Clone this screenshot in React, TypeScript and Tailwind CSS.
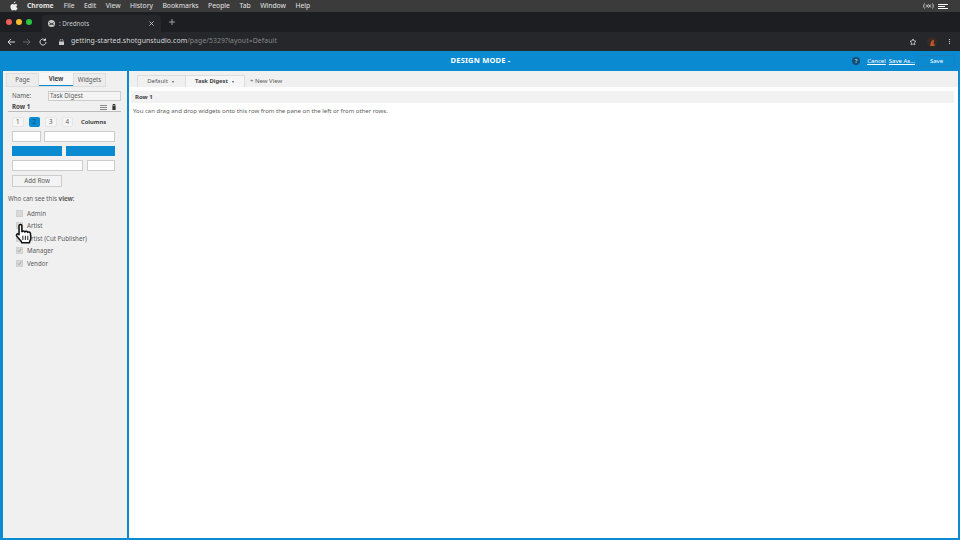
const menuItems = ['File', 'Edit', 'View', 'History', 'Bookmarks', 'People', 'Tab', 'Window', 'Help'];
const roles = [
    { name: 'Admin', checked: false },
    { name: 'Artist', checked: false },
    { name: 'Artist (Cut Publisher)', checked: true },
    { name: 'Manager', checked: true },
    { name: 'Vendor', checked: true },
];

const Caret = () => <span className="inline-block w-0 h-0 border-x-[1.500px] border-x-transparent border-t-[2px] border-t-[#555] ml-[4px] align-middle" />;

const MenuBar = () => (
    <div className="h-3 bg-[#3b3b3b] flex items-center text-[6.800px] text-[#e4e4e4]">
        <svg className="w-2 h-2.5 ml-[10px] mr-[9px]" viewBox="0 0 16 20" fill="#eee">
            <path d="M11 1c.2 2-1.600 3.800-3.400 3.700C7.400 2.900 9.200 1.200 11 1zM15 14.500c-.8 2-2.300 4.500-3.800 4.500-1.200 0-1.700-.8-3.100-.8s-2 .8-3.100.8C3 19 .8 15 .8 11.500c0-3.300 2.200-5.400 4.400-5.400 1.300 0 2.300.8 3 .8s1.900-1 3.400-.9c1.300.1 2.500.7 3.200 1.800-2.900 1.800-2.400 5.600.2 6.700z" />
        </svg>
        <span className="font-bold mr-[10px]">Chrome</span>
        <div className="flex gap-[9.500px]">
            {menuItems.map((item) => <span key={item}>{item}</span>)}
        </div>
        <div className="ml-auto flex items-center gap-[4px] mr-[12px]">
            <svg className="w-[11px] h-[6px]" viewBox="0 0 11 6" fill="none" stroke="#ddd" strokeWidth=".8">
                <path d="M1.500.5C.5 2 .5 4 1.500 5.500M9.500.5c1 1.500 1 3.500 0 5M3 1.500l2.500 3 2.500-3M3 4.500l2.500-3 2.500 3" />
            </svg>
            <div className="flex flex-col gap-[1px]">
                <div className="w-[10px] h-[1px] bg-white" />
                <div className="w-[7px] h-[1px] bg-white" />
                <div className="w-[10px] h-[1px] bg-white" />
            </div>
        </div>
    </div>
);

const TabStrip = () => (
    <div className="h-5 bg-[#1d1e21] flex items-end">
        <div className="flex gap-[4px] ml-[6px] self-center mr-[10px]">
            <div className="w-[6px] h-[6px] rounded-full bg-[#ee5f57]" />
            <div className="w-[6px] h-[6px] rounded-full bg-[#f5bd2f]" />
            <div className="w-[6px] h-[6px] rounded-full bg-[#28c840]" />
        </div>
        <div className="w-[119px] h-[17px] bg-[#25272a] rounded-t-[4px] flex items-center text-[6.200px] text-[#c4c7ca] pl-[6px] pr-[7px]">
            <svg className="w-[7px] h-[7px] mr-[4px]" viewBox="0 0 8 8">
                <circle cx="4" cy="4" r="4" fill="#ccc" />
                <path d="M1.500 3l2.500 1.500L6.500 3M1.500 5.500l2.500-1 2.500 1" stroke="#222" fill="none" />
            </svg>
            <span>: Drednots</span>
            <svg className="ml-auto w-[5px] h-[5px]" viewBox="0 0 6 6" stroke="#ccc" strokeWidth="1">
                <path d="M.5.5l5 5M5.500.5l-5 5" />
            </svg>
        </div>
        <svg className="w-[6px] h-[6px] ml-[8px] self-center" viewBox="0 0 6 6" stroke="#9a9c9f" strokeWidth="1">
            <path d="M3 0v6M0 3h6" />
        </svg>
    </div>
);

const UrlBar = () => (
    <div className="h-[19px] bg-[#25272a] flex items-center text-[6.900px]">
        <svg className="w-[8px] h-[8px] ml-[7px]" viewBox="0 0 8 8" stroke="#d5d7da" fill="none" strokeWidth="1">
            <path d="M8 4H1M4 1L1 4l3 3" />
        </svg>
        <svg className="w-[8px] h-[8px] ml-[8px]" viewBox="0 0 8 8" stroke="#66686b" fill="none" strokeWidth="1">
            <path d="M0 4h7M4 1l3 3-3 3" />
        </svg>
        <svg className="w-[8px] h-[8px] ml-[8px]" viewBox="0 0 8 8" stroke="#d5d7da" fill="none" strokeWidth="1">
            <path d="M7 4a3 3 0 1 1-1-2.200M6.500.5v2h-2" />
        </svg>
        <svg className="w-[5px] h-[6px] ml-[12px] mr-[7px]" viewBox="0 0 5 6" fill="#c9cbce">
            <rect x="0" y="2.500" width="5" height="3.500" />
            <path d="M1 2.500V1.500a1.500 1.500 0 0 1 3 0v1" fill="none" stroke="#c9cbce" strokeWidth=".7" />
        </svg>
        <span className="text-[#d6d8da] tracking-[0.08px]">getting-started.shotgunstudio.com</span>
        <span className="text-[#85888b] tracking-[0.08px]">/page/5329?layout=Default</span>
        <svg className="w-[8px] h-[8px] ml-auto" viewBox="0 0 24 24" fill="none" stroke="#d0d2d5" strokeWidth="2.500">
            <path d="M12 3l2.800 5.800 6.200.9-4.500 4.400 1.100 6.300L12 17.400l-5.600 3 1.100-6.300L3 9.700l6.200-.9z" />
        </svg>
        <svg className="w-[10px] h-[10px] ml-[10px]" viewBox="0 0 10 10">
            <circle cx="5" cy="5" r="5" fill="#3a2a22" />
            <path d="M3 9l1-4 2-2.500 1 1-.5 2L8 9z" fill="#b5562c" />
        </svg>
        <div className="flex flex-col gap-[1px] ml-[12px] mr-[10px]">
            <div className="w-[1px] h-[1px] bg-[#ddd]" />
            <div className="w-[1px] h-[1px] bg-[#ddd]" />
            <div className="w-[1px] h-[1px] bg-[#ddd]" />
        </div>
    </div>
);

const DesignBar = () => (
    <div className="h-[19px] bg-[#0a8ad1] flex items-center text-white relative">
        <div className="flex-1 text-center text-[7.500px] font-bold tracking-[0.2px] pl-[1px]">DESIGN MODE -</div>
        <div className="absolute right-[5px] top-[4px] flex items-center text-[6px]">
            <div className="w-[8px] h-[8px] rounded-full bg-[#164e78] text-[6px] text-[#9cc3dc] font-bold flex items-center justify-center mr-[7px]">?</div>
            <span className="underline mr-[3px]">Cancel</span>
            <span className="underline mr-[3px]">Save As...</span>
            <div className="w-[37px] h-[12px] border border-[#1a7fbd] flex items-center justify-center">Save</div>
        </div>
    </div>
);

const Sidebar = () => (
    <div className="w-[124px] bg-[#f0f0f0] text-[6.200px] text-[#5c5c5c] flex flex-col">
        <div className="h-[14px] flex mt-[2px] ml-[3px] border-b border-[#ddd] w-[100px]">
            <div className="w-[33px] flex items-center justify-center bg-[#ececec] border border-[#ddd] border-b-0">Page</div>
            <div className="w-[34px] flex items-center justify-center font-bold bg-[#f6f6f6] border-b-[1.500px] border-[#0a8ad1] text-[#444]">View</div>
            <div className="w-[33px] flex items-center justify-center bg-[#ececec] border border-[#ddd] border-b-0">Widgets</div>
        </div>
        <div className="flex items-center mt-[4px] ml-[9px]">
            <span className="w-[36px]">Name:</span>
            <div className="w-[73px] h-[10px] bg-[#f4f4f4] border border-[#ccc] flex items-center pl-[1px]">Task Digest</div>
        </div>
        <div className="flex items-center ml-[5px] mr-[6px] pl-[4px] pt-[2px] h-[11px] border-b border-[#bbb] font-bold text-[#444]">
            <span>Row 1</span>
            <div className="ml-auto flex flex-col gap-[1px] mr-[5px]">
                <div className="w-[7px] h-[1px] bg-[#888]" />
                <div className="w-[7px] h-[1px] bg-[#888]" />
                <div className="w-[7px] h-[1px] bg-[#888]" />
            </div>
            <svg className="w-[4px] h-[6px] mr-[5px]" viewBox="0 0 4 6" fill="#333">
                <path d="M1 0h2v.7h1v.6H0V.7h1zM.4 1.700h3.200V6H.4z" />
            </svg>
        </div>
        <div className="flex items-center mt-[5px] ml-[9px] gap-[5px]">
            {[1, 2, 3, 4].map((n) => (
                <div key={n} className={`w-[11.500px] h-[10px] rounded-[2px] flex items-center justify-center ${n === 2 ? 'bg-[#0a8ad1] text-[#07507c]' : 'bg-[#f5f5f5] border border-[#e6e6e6]'}`}>{n}</div>
            ))}
            <span className="font-bold text-[5.800px] text-[#444] ml-[3px]">Columns</span>
        </div>
        <div className="flex mt-[4px] ml-[9px] gap-[3px]">
            <div className="w-[29px] h-[11px] bg-white border border-[#ccc]" />
            <div className="w-[71px] h-[11px] bg-white border border-[#ccc]" />
        </div>
        <div className="flex mt-[4px] ml-[9px] gap-[4px]">
            <div className="w-[49.500px] h-[10px] bg-[#0a8ad1]" />
            <div className="w-[49.500px] h-[10px] bg-[#0a8ad1]" />
        </div>
        <div className="flex mt-[4px] ml-[9px] gap-[4px]">
            <div className="w-[71px] h-[11px] bg-white border border-[#ccc]" />
            <div className="w-[28px] h-[11px] bg-white border border-[#ccc]" />
        </div>
        <div className="w-[50px] h-[12px] mt-[4px] ml-[9px] bg-[#f3f3f3] border border-[#ccc] flex items-center justify-center">Add Row</div>
        <div className="mt-[7px] ml-[5px]">Who can see this <span className="font-bold">view</span>:</div>
        <div className="mt-[6.500px] ml-[13px] flex flex-col gap-[5.500px]">
            {roles.map((role) => (
                <div key={role.name} className="h-[7px] flex items-center gap-[4px]">
                    <div className="w-[7px] h-[7px] bg-[#d8d8d8] border border-[#d0d0d0] flex items-center justify-center">
                        {role.checked && (
                            <svg className="w-[5px] h-[5px]" viewBox="0 0 6 6" fill="none" stroke="#999" strokeWidth="1">
                                <path d="M1 3l1.500 1.500L5 1" />
                            </svg>
                        )}
                    </div>
                    <span>{role.name}</span>
                </div>
            ))}
        </div>
    </div>
);

const Cursor = () => (
    <svg className="absolute left-[14px] top-[222px] w-[21px] h-[23px]" viewBox="0 0 18 21">
        <path d="M4 3.500c0-1.500 2.600-1.500 2.600 0V9c.2-1.200 2.500-1.200 2.700.2.200-1 2.400-1 2.600.4.300-.8 2.400-.7 2.500.8l.4 3.600c.1 1.500-.4 2.500-1 3.500l-.3 1.500H6.500l-.5-1.500-4-4.500c-1-1.200.4-2.800 1.700-1.800l.3.300z" fill="#fff" stroke="#111" strokeWidth="1.400" strokeLinejoin="round" />
        <path d="M7.500 12.500v4M9.800 12.500v4M12 12.500v4" stroke="#333" strokeWidth="1" />
    </svg>
);

const Main = () => (
    <div className="flex-1 bg-white text-[6px] text-[#5c5c5c] flex flex-col">
        <div className="h-[16px] bg-[#f0f0f0] flex items-end pl-[8px]">
            <div className="w-[48px] h-[12px] flex items-center justify-center pr-[2px] border-l border-t border-[#ddd] bg-[#f0f0f0]">Default <Caret /></div>
            <div className="w-[60px] h-[12px] flex items-center justify-center pr-[1px] font-bold text-[5.800px] text-[#444] bg-[#f6f6f6] border-x border-t border-[#ddd]">Task Digest <Caret /></div>
            <span className="ml-[5px] self-center mt-[4px]">+ New View</span>
        </div>
        <div className="h-[12px] mt-[4px] ml-[2px] mr-[4px] bg-[#f2f2f2] flex items-center pl-[4px] font-bold text-[#444]">Row 1</div>
        <div className="mt-[4px] ml-[4px]">You can drag and drop widgets onto this row from the pane on the left or from other rows.</div>
    </div>
);

export default function App() {
    return (
        <div className="w-[960px] h-[540px] overflow-hidden flex flex-col relative" style={{ fontFamily: '"Noto Sans", "Open Sans", sans-serif' }}>
            <MenuBar />
            <TabStrip />
            <UrlBar />
            <DesignBar />
            <div className="flex-1 flex bg-[#0a8ad1] pl-[3px] pr-[2px] pb-[2px] pt-[1px] gap-[2px] min-h-0">
                <Sidebar />
                <Main />
            </div>
            <Cursor />
        </div>
    );
}
